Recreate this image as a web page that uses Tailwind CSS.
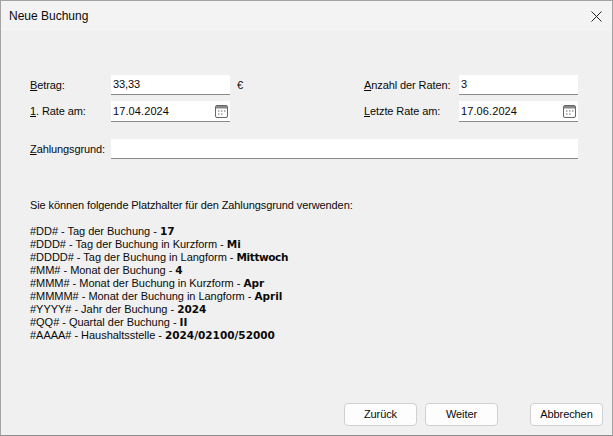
<!DOCTYPE html>
<html lang="de">
<head>
    <meta charset="UTF-8">
    <title>Neue Buchung</title>
    <script src="https://cdn.jsdelivr.net/npm/@tailwindcss/browser@4"></script>
</head>
<body class="bg-[#f0f0f0]">
    <div class="flex flex-col w-[613px] h-[436px] overflow-hidden border border-[#a3a3a3] border-b-[#8c8c8c] bg-[#f0f0f0] text-[11px] leading-[13px] tracking-[-0.1px] text-[#0a0a0a] font-['Liberation_Sans',sans-serif]">
        <!-- title bar -->
        <div class="flex items-center justify-between h-[30px] shrink-0 pl-[8px] pr-[10px] bg-[#f3f3f3]">
            <span class="text-[12px] tracking-normal">Neue Buchung</span>
            <svg width="11" height="11" viewBox="0 0 11 11" fill="none" stroke="#222" stroke-width="1"><path d="M0.5 0.5L10.5 10.5M10.5 0.5L0.5 10.5"/></svg>
        </div>

        <div class="flex flex-col grow pl-[29px] pr-[34px] pt-[44px]">
            <!-- Betrag / Anzahl -->
            <div class="flex items-center h-[20px]">
                <label class="w-[81px]"><u>B</u>etrag:</label>
                <div class="flex items-center w-[119px] h-[20px] px-[2px] bg-white border-b border-[#8a8a8a]">33,33</div>
                <span class="ml-[7px] w-[127px]">€</span>
                <label class="w-[95px] whitespace-nowrap"><u>A</u>nzahl der Raten:</label>
                <div class="flex items-center w-[119px] h-[20px] px-[2px] bg-white border-b border-[#8a8a8a]">3</div>
            </div>
            <!-- Raten -->
            <div class="flex items-center h-[21px] mt-[6px]">
                <label class="w-[81px]"><u>1</u>. Rate am:</label>
                <div class="flex items-center justify-between w-[119px] h-[21px] pl-[2px] pr-[2px] tracking-[0.1px] bg-white border-b border-[#8a8a8a]">
                    17.04.2024
                    <svg width="13" height="13" viewBox="0 0 13 13" fill="none"><rect x="0.5" y="0.5" width="12" height="12" rx="1.5" stroke="#666"/><path d="M1 1h11v2.5H1z" fill="#888"/><path d="M3 6h1.5M6 6h1.5M9 6h1.5M3 9h1.5M6 9h1.5" stroke="#666"/></svg>
                </div>
                <span class="ml-[7px] w-[127px]"></span>
                <label class="w-[95px] whitespace-nowrap"><u>L</u>etzte Rate am:</label>
                <div class="flex items-center justify-between w-[119px] h-[21px] pl-[2px] pr-[2px] tracking-[0.1px] bg-white border-b border-[#8a8a8a]">
                    17.06.2024
                    <svg width="13" height="13" viewBox="0 0 13 13" fill="none"><rect x="0.5" y="0.5" width="12" height="12" rx="1.5" stroke="#666"/><path d="M1 1h11v2.5H1z" fill="#888"/><path d="M3 6h1.5M6 6h1.5M9 6h1.5M3 9h1.5M6 9h1.5" stroke="#666"/></svg>
                </div>
            </div>
            <!-- Zahlungsgrund -->
            <div class="flex items-center h-[20px] mt-[17px]">
                <label class="w-[81px] whitespace-nowrap"><u>Z</u>ahlungsgrund:</label>
                <div class="w-[467px] h-[20px] bg-white border-b border-[#8a8a8a]"></div>
            </div>

            <p class="mt-[40px]">Sie können folgende Platzhalter für den Zahlungsgrund verwenden:</p>
            <ul class="mt-[13px] tracking-[-0.03px] [&_b]:font-['DejaVu_Sans',sans-serif] [&_b]:text-[10.5px] [&_b]:tracking-normal">
                <li>#DD# - Tag der Buchung - <b>17</b></li>
                <li>#DDD# - Tag der Buchung in Kurzform - <b>Mi</b></li>
                <li>#DDDD# - Tag der Buchung in Langform - <b class="tracking-[-0.4px]!">Mittwoch</b></li>
                <li>#MM# - Monat der Buchung - <b>4</b></li>
                <li>#MMM# - Monat der Buchung in Kurzform - <b>Apr</b></li>
                <li>#MMMM# - Monat der Buchung in Langform - <b>April</b></li>
                <li>#YYYY# - Jahr der Buchung - <b>2024</b></li>
                <li>#QQ# - Quartal der Buchung - <b>II</b></li>
                <li>#AAAA# - Haushaltsstelle - <b>2024/02100/52000</b></li>
            </ul>
        </div>

        <!-- buttons -->
        <div class="flex justify-end shrink-0 pr-[9px] pb-[9px]">
            <button class="w-[73px] h-[23px] bg-[#fdfdfd] border border-[#d0d0d0] rounded-[4px] text-center">Zurück</button>
            <button class="w-[73px] h-[23px] ml-[8px] bg-[#fdfdfd] border border-[#d0d0d0] rounded-[4px] text-center">Weiter</button>
            <button class="w-[73px] h-[23px] ml-[32px] bg-[#fdfdfd] border border-[#d0d0d0] rounded-[4px] text-center">Abbrechen</button>
        </div>
    </div>
</body>
</html>
